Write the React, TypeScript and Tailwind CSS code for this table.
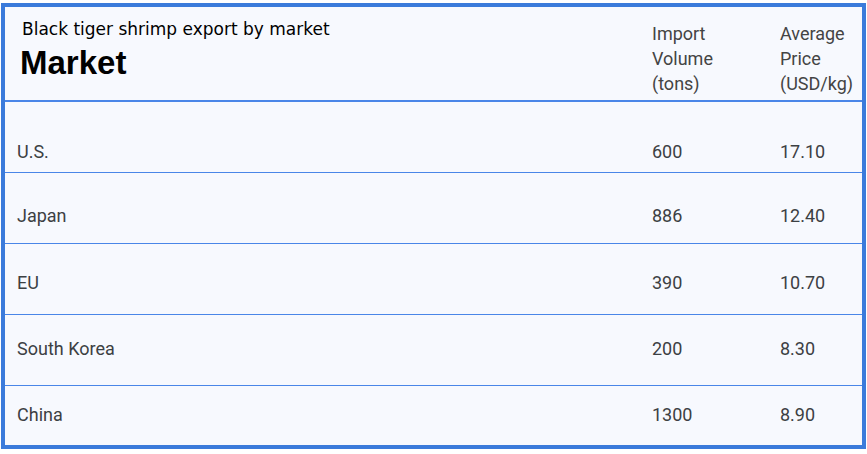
const rows = [
  { market: 'U.S.', volume: '600', price: '17.10', pad: 'pt-[38px] h-[71px]' },
  { market: 'Japan', volume: '886', price: '12.40', pad: 'pt-[31px] h-[71px]' },
  { market: 'EU', volume: '390', price: '10.70', pad: 'pt-[27px] h-[71px]' },
  { market: 'South Korea', volume: '200', price: '8.30', pad: 'pt-[22px] h-[71px]' },
  { market: 'China', volume: '1300', price: '8.90', pad: 'pt-[17px] h-[56px]' },
];

export default function App() {
  return (
    <div className="w-[867px] h-[454px] bg-white pt-[3px] pl-[1px]">
      <div className="w-[865px] h-[446px] border-4 border-[#3b7bdb] bg-[#f7f9fe] flex flex-col">
        {/* Header */}
        <div className="grid grid-cols-[647px_128px_1fr] h-[95px] border-b-2 border-[#4a86e8]">
          <div className="pl-[15px]">
            <div className="pl-[2px] pt-[11px] text-[17px] leading-[22px] text-black font-['DejaVu_Sans',sans-serif]">
              Black tiger shrimp export by market
            </div>
            <div className="mt-[6px] text-[33px] leading-[33px] font-bold text-black font-['Liberation_Sans',Arial,sans-serif]">
              Market
            </div>
          </div>
          <div className="pt-[14px] text-[18px] leading-[25px] text-[#444] font-['Roboto',sans-serif]">
            Import<br />Volume<br />(tons)
          </div>
          <div className="pt-[14px] text-[18px] leading-[25px] text-[#444] font-['Roboto',sans-serif]">
            Average<br />Price<br />(USD/kg)
          </div>
        </div>

        {/* Rows */}
        {rows.map((r, i) => (
          <div
            key={r.market}
            className={`grid grid-cols-[647px_128px_1fr] ${r.pad} text-[18px] leading-[24px] text-[#3c4043] font-['Roboto',sans-serif] ${
              i < rows.length - 1 ? 'border-b border-[#4a86e8]' : ''
            }`}
          >
            <div className="pl-[12px]">{r.market}</div>
            <div>{r.volume}</div>
            <div>{r.price}</div>
          </div>
        ))}
      </div>
    </div>
  );
}
